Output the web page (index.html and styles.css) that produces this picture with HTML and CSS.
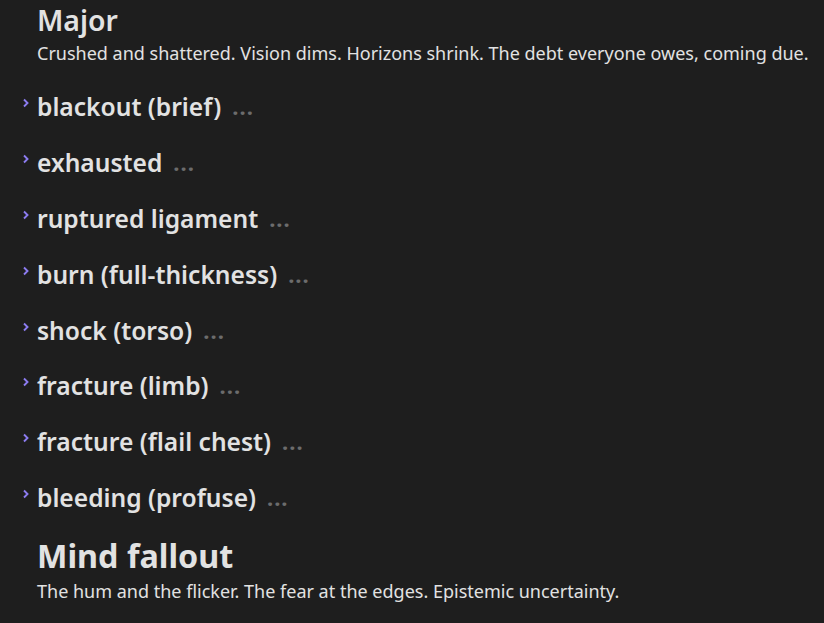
FILE: index.html
```html
<!DOCTYPE html>
<html>
<head>
<meta charset="utf-8">
<link rel="stylesheet" href="styles.css">
</head>
<body>
<div class="page">
  <section class="group">
    <h2 class="group-title">Major</h2>
    <p class="group-desc">Crushed and shattered. Vision dims. Horizons shrink. The debt everyone owes, coming due.</p>
  </section>
  <ul class="items">
    <li class="item"><span class="chev"><svg width="8" height="10" viewBox="0 0 8 10"><path d="M2 1.5 L5.5 5 L2 8.5" fill="none" stroke="#8c7cf0" stroke-width="1.9"/></svg></span><span class="name">blackout (brief)</span><span class="more">...</span></li>
    <li class="item"><span class="chev"><svg width="8" height="10" viewBox="0 0 8 10"><path d="M2 1.5 L5.5 5 L2 8.5" fill="none" stroke="#8c7cf0" stroke-width="1.9"/></svg></span><span class="name">exhausted</span><span class="more">...</span></li>
    <li class="item"><span class="chev"><svg width="8" height="10" viewBox="0 0 8 10"><path d="M2 1.5 L5.5 5 L2 8.5" fill="none" stroke="#8c7cf0" stroke-width="1.9"/></svg></span><span class="name">ruptured ligament</span><span class="more">...</span></li>
    <li class="item"><span class="chev"><svg width="8" height="10" viewBox="0 0 8 10"><path d="M2 1.5 L5.5 5 L2 8.5" fill="none" stroke="#8c7cf0" stroke-width="1.9"/></svg></span><span class="name">burn (full-thickness)</span><span class="more">...</span></li>
    <li class="item"><span class="chev"><svg width="8" height="10" viewBox="0 0 8 10"><path d="M2 1.5 L5.5 5 L2 8.5" fill="none" stroke="#8c7cf0" stroke-width="1.9"/></svg></span><span class="name">shock (torso)</span><span class="more">...</span></li>
    <li class="item"><span class="chev"><svg width="8" height="10" viewBox="0 0 8 10"><path d="M2 1.5 L5.5 5 L2 8.5" fill="none" stroke="#8c7cf0" stroke-width="1.9"/></svg></span><span class="name">fracture (limb)</span><span class="more">...</span></li>
    <li class="item"><span class="chev"><svg width="8" height="10" viewBox="0 0 8 10"><path d="M2 1.5 L5.5 5 L2 8.5" fill="none" stroke="#8c7cf0" stroke-width="1.9"/></svg></span><span class="name">fracture (flail chest)</span><span class="more">...</span></li>
    <li class="item"><span class="chev"><svg width="8" height="10" viewBox="0 0 8 10"><path d="M2 1.5 L5.5 5 L2 8.5" fill="none" stroke="#8c7cf0" stroke-width="1.9"/></svg></span><span class="name">bleeding (profuse)</span><span class="more">...</span></li>
  </ul>
  <section class="group">
    <h1 class="section-title">Mind fallout</h1>
    <p class="group-desc last">The hum and the flicker. The fear at the edges. Epistemic uncertainty.</p>
  </section>
</div>
</body>
</html>
```

FILE: styles.css
```css
html, body {
  margin: 0;
  padding: 0;
  background: #1e1e1e;
}
body {
  font-family: "Noto Sans", "Open Sans", sans-serif;
  color: #e2e2e2;
  overflow: hidden;
}
.page {
  padding: 2px 0 0 37px;
}
.group-title {
  margin: 0;
  font-size: 28.4px;
  font-weight: 600;
  line-height: 36px;
}
.group-desc {
  margin: 3px 0 0;
  font-size: 18px;
  line-height: 24px;
}
.group-desc.last {
  margin-top: 2px;
}
.items {
  list-style: none;
  margin: 14px 0 0 -20px;
  padding: 0;
}
.item {
  display: flex;
  align-items: center;
  height: 55.8px;
}
.chev {
  width: 20px;
  display: flex;
  justify-content: flex-end;
  margin-top: -7px;
}
.chev svg { margin-right: 7px; }
.name {
  font-size: 24.6px;
  font-weight: 600;
}
.more {
  margin-left: 11px;
  font-size: 22px;
  font-weight: 700;
  color: #6c6c6c;
  margin-top: -1px;
  letter-spacing: 1px;
}
.section-title {
  margin: 8px 0 0;
  font-size: 32.3px;
  font-weight: 700;
  line-height: 44px;
}
```
